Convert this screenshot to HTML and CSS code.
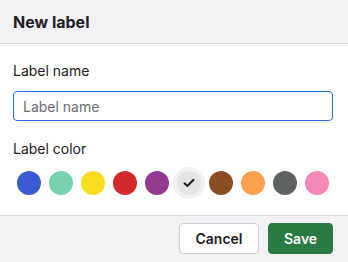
FILE: index.html
```html
<!DOCTYPE html>
<html lang="en">
<head>
  <meta charset="UTF-8">
  <meta name="viewport" content="width=device-width, initial-scale=1.0">
  <title>New label</title>
  <link rel="stylesheet" href="styles.css">
</head>
<body>
  <div class="dialog">
    <div class="dialog-header">
      <h1>New label</h1>
    </div>

    <div class="dialog-body">
      <label class="field-label" for="label-name">Label name</label>
      <input id="label-name" class="text-input" type="text" placeholder="Label name" autofocus>

      <div class="field-label color-title">Label color</div>
      <div class="swatches">
        <span class="swatch" style="background:#3a5ad3"></span>
        <span class="swatch" style="background:#78d2b0"></span>
        <span class="swatch" style="background:#f9dc1f"></span>
        <span class="swatch" style="background:#d3292d"></span>
        <span class="swatch" style="background:#933a90"></span>
        <span class="swatch selected">
          <svg width="12" height="10" viewBox="0 0 12 10"><path d="M1.5 5.2 L4.4 8 L10.5 1.8" fill="none" stroke="#1f2023" stroke-width="2" stroke-linecap="round" stroke-linejoin="round"/></svg>
        </span>
        <span class="swatch" style="background:#8b4e24"></span>
        <span class="swatch" style="background:#ffa04f"></span>
        <span class="swatch" style="background:#5f6263"></span>
        <span class="swatch" style="background:#f687b7"></span>
      </div>
    </div>

    <div class="dialog-footer">
      <button class="btn btn-cancel">Cancel</button>
      <button class="btn btn-save">Save</button>
    </div>
  </div>
</body>
</html>
```

FILE: styles.css
```css
* { box-sizing: border-box; margin: 0; padding: 0; }

body {
  font-family: Inter, "Liberation Sans", sans-serif;
  color: #1f2023;
  background: #f2f2f4;
}

.dialog {
  width: 348px;
  height: 262px;
  display: flex;
  flex-direction: column;
}

.dialog-header {
  height: 44px;
  background: #f2f2f4;
  border-bottom: 1px solid #dcdcdf;
  padding: 0 13px;
  display: flex;
  align-items: center;
}

.dialog-header h1 {
  font-size: 16px;
  font-weight: 700;
  margin-top: 1px;
}

.dialog-body {
  background: #fff;
  padding: 17px 13px 16px 13px;
  display: flex;
  flex-direction: column;
}

.field-label {
  font-size: 14px;
  line-height: 20px;
}

.text-input {
  margin-top: 10px;
  height: 30px;
  width: 320px;
  border: 1px solid #2b6fdf;
  border-radius: 4px;
  padding: 0 9px;
  font-family: inherit;
  font-size: 14px;
  color: #1f2023;
  caret-color: #1f2023;
  outline: none;
}

.text-input::placeholder {
  color: #6b6d72;
}

.color-title {
  margin-top: 18px;
}

.swatches {
  margin-top: 8px;
  display: flex;
  align-items: center;
  gap: 8px;
  padding-left: 4px;
  height: 32px;
}

.swatch {
  width: 24px;
  height: 24px;
  border-radius: 50%;
  flex-shrink: 0;
}

.swatch.selected {
  background: #e4e5e6;
  box-shadow: 0 0 0 4px #f1f1f2;
  display: flex;
  align-items: center;
  justify-content: center;
}

.dialog-footer {
  flex: 1;
  background: #f2f2f4;
  border-top: 1px solid #dcdcdf;
  padding: 7px 15px 0 0;
  display: flex;
  justify-content: flex-end;
  align-items: flex-start;
  gap: 9px;
}

.btn {
  height: 31px;
  border-radius: 4px;
  font-family: inherit;
  font-size: 14px;
  font-weight: 600;
  padding: 0 15px;
  cursor: pointer;
}

.btn-cancel {
  width: 80px;
  background: #fff;
  border: 1px solid #cfd0d3;
  color: #1f2023;
}

.btn-save {
  width: 65px;
  background: #277b43;
  border: 1px solid #277b43;
  color: #fff;
}
```
